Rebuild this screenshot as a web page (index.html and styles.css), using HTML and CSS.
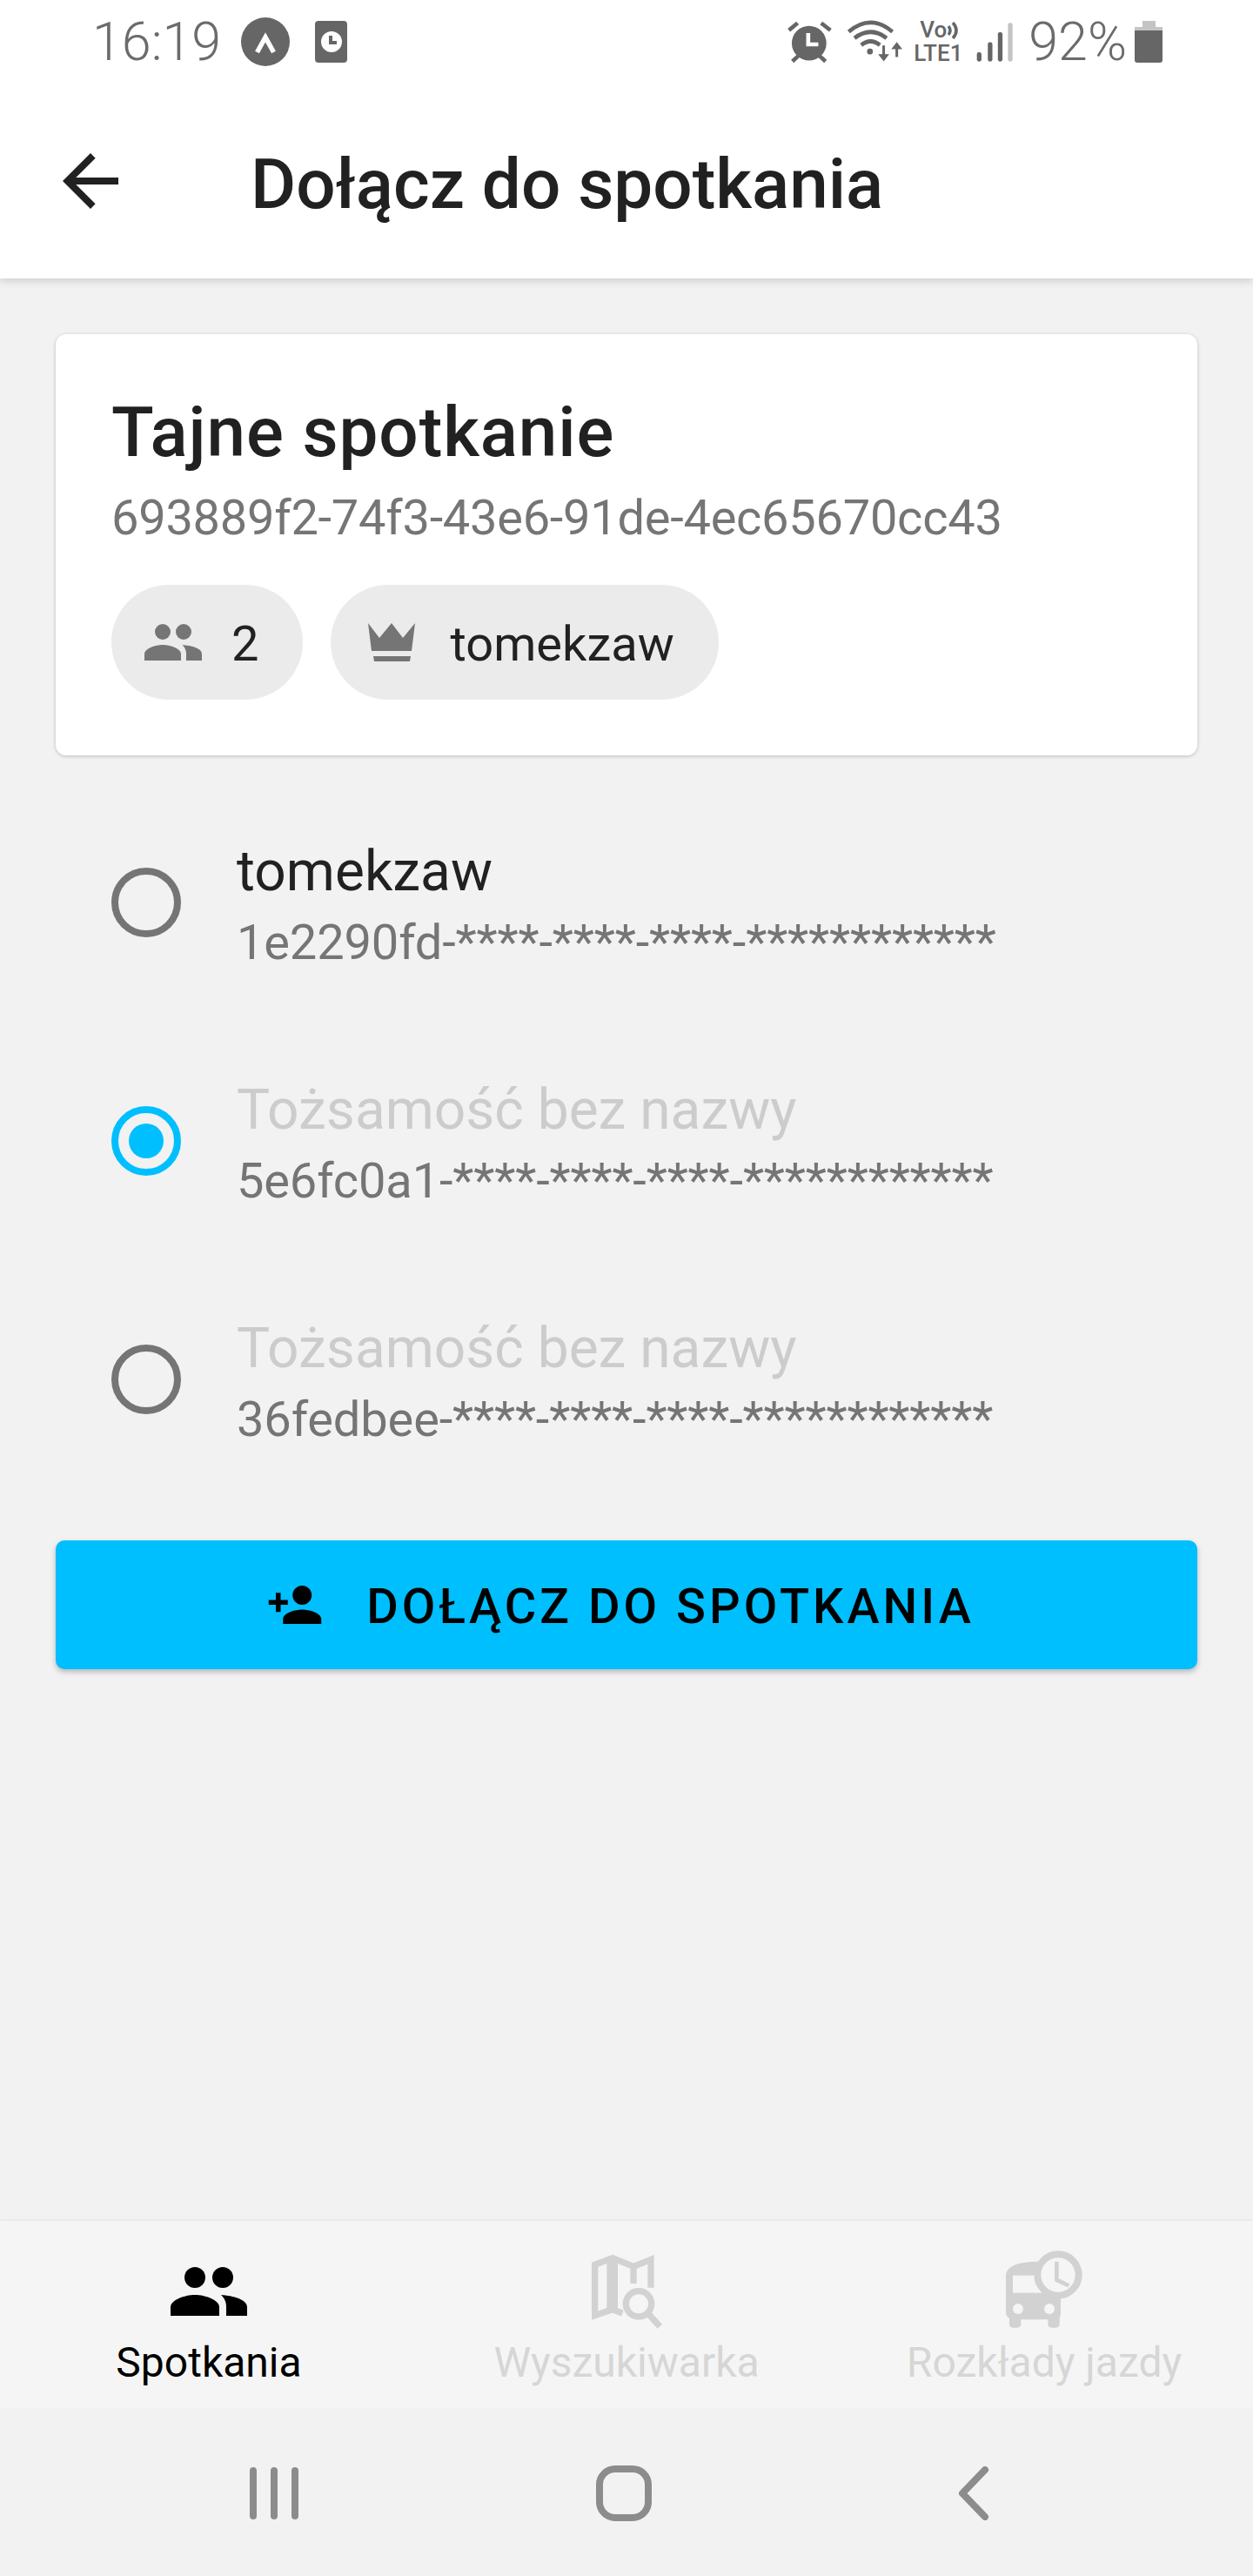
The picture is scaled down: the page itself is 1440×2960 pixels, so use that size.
FILE: index.html
```html
<!DOCTYPE html>
<html lang="pl">
<head>
  <meta charset="utf-8">
  <title>Dołącz do spotkania</title>
  <link rel="stylesheet" href="styles.css">
</head>
<body>
  <div class="statusbar">
    <span class="time">16:19</span>
    <svg class="st-circle" width="56" height="56" viewBox="0 0 56 56">
      <circle cx="28" cy="28" r="28" fill="#666"/>
      <path d="M18.5 40L28 23L37.5 40" fill="none" stroke="#fff" stroke-width="5.5"/>
    </svg>
    <svg class="st-calendar" width="37" height="48" viewBox="0 0 37 48">
      <rect width="37" height="48" rx="4" fill="#666"/>
      <circle cx="19" cy="24" r="12" fill="#fff"/>
      <path d="M18 17V25H25" fill="none" stroke="#666" stroke-width="4"/>
    </svg>
    <svg class="st-alarm" width="53" height="50" viewBox="30 35 160 150">
      <circle cx="108" cy="115" r="60" fill="#666"/>
      <path d="M105 80V119H140" fill="none" stroke="#fff" stroke-width="14"/>
      <path d="M38 70L68 45M150 45L182 70M50 178L72 158M165 178L143 158" stroke="#666" stroke-width="14" fill="none"/>
    </svg>
    <svg class="st-wifi" width="67" height="52" viewBox="235 35 200 155">
      <path d="M245 78Q320 15 395 78M265 100Q320 58 375 100M288 124Q320 98 352 124" fill="none" stroke="#666" stroke-width="14"/>
      <circle cx="318" cy="146" r="10" fill="#666"/>
      <path d="M365 125V165M410 165V125" stroke="#666" stroke-width="9" fill="none"/>
      <path d="M346 155H384L365 180ZM391 138H429L410 113Z" fill="#666"/>
    </svg>
    <div class="st-volte">
      <div class="volte-top">
        <span>Vo</span>
        <svg width="20" height="20" viewBox="0 0 20 20">
          <path d="M2 5Q6 10 2 15M7 1Q15 10 7 19" fill="none" stroke="#666" stroke-width="3.5"/>
        </svg>
      </div>
      <div>LTE1</div>
    </div>
    <svg class="st-signal" width="43" height="47" viewBox="678 45 130 140">
      <rect x="680" y="150" width="16" height="32" rx="7" fill="#666"/>
      <rect x="718" y="115" width="16" height="67" rx="7" fill="#666"/>
      <rect x="753" y="80" width="16" height="102" rx="7" fill="#666"/>
      <rect x="788" y="48" width="16" height="134" rx="7" fill="#c4c4c4"/>
    </svg>
    <span class="battery-pct">92%</span>
    <div class="battery">
      <div class="battery-cap"></div>
      <div class="battery-band"></div>
      <div class="battery-fill"></div>
    </div>
  </div>

  <div class="toolbar">
    <svg class="back" width="96" height="96" viewBox="0 0 24 24">
      <path d="M20 11H7.83l5.59-5.59L12 4l-8 8 8 8 1.41-1.41L7.83 13H20v-2z" fill="#212121"/>
    </svg>
    <h1>Dołącz do spotkania</h1>
  </div>

  <div class="content">
    <div class="card">
      <h2>Tajne spotkanie</h2>
      <div class="card-id">693889f2-74f3-43e6-91de-4ec65670cc43</div>
      <div class="chips">
        <div class="chip chip-count">
          <svg width="66" height="42" viewBox="0 0 88 56" fill="#757575">
            <circle cx="28" cy="12" r="12"/>
            <circle cx="60" cy="12" r="12"/>
            <path d="M0 56V46C0 38 16 32 28 32S56 38 56 46V56Z"/>
            <path d="M58 32C72 33 88 37 88 46V56H64V46C64 40 62 36 58 32Z"/>
          </svg>
          <span>2</span>
        </div>
        <div class="chip chip-owner">
          <svg width="54" height="44" viewBox="0 0 54 44" fill="#757575">
            <path d="M0 0L13 17L27 0L40 17L54 0L50 32H4Z"/>
            <path d="M6 38H49L48 44H7Z"/>
          </svg>
          <span>tomekzaw</span>
        </div>
      </div>
    </div>

    <div class="identities">
      <div class="identity">
        <div class="radio"></div>
        <div>
          <div class="identity-name">tomekzaw</div>
          <div class="identity-key">1e2290fd-****-****-****-************</div>
        </div>
      </div>
      <div class="identity">
        <div class="radio radio-on"></div>
        <div>
          <div class="identity-name unnamed">Tożsamość bez nazwy</div>
          <div class="identity-key">5e6fc0a1-****-****-****-************</div>
        </div>
      </div>
      <div class="identity">
        <div class="radio"></div>
        <div>
          <div class="identity-name unnamed">Tożsamość bez nazwy</div>
          <div class="identity-key">36fedbee-****-****-****-************</div>
        </div>
      </div>
    </div>

    <button class="join">
      <svg width="66" height="66" viewBox="0 0 24 24">
        <path d="M15 12c2.21 0 4-1.79 4-4s-1.79-4-4-4-4 1.79-4 4 1.79 4 4 4zm-9-2V7H4v3H1v2h3v3h2v-3h3v-2H6zm9 4c-2.67 0-8 1.34-8 4v2h16v-2c0-2.66-5.33-4-8-4z"/>
      </svg>
      <span>Dołącz do spotkania</span>
    </button>
  </div>

  <div class="tabs">
    <div class="tab tab-active">
      <div class="tab-icon">
        <svg width="88" height="56" viewBox="0 0 88 56" fill="#000">
          <circle cx="28" cy="12" r="12"/>
          <circle cx="60" cy="12" r="12"/>
          <path d="M0 56V46C0 38 16 32 28 32S56 38 56 46V56Z"/>
          <path d="M58 32C72 33 88 37 88 46V56H64V46C64 40 62 36 58 32Z"/>
        </svg>
      </div>
      <div class="tab-label">Spotkania</div>
    </div>
    <div class="tab">
      <div class="tab-icon">
        <svg width="110" height="110" viewBox="15 0 330 330" fill="none" stroke="#d2d2d2">
          <path d="M166 240L131 227L71 248V73L132 50L204 79L264 55V152" stroke-width="22"/>
          <path d="M131 50V227" stroke-width="38"/>
          <path d="M204 79V138" stroke-width="22"/>
          <circle cx="222" cy="208" r="44" stroke-width="22"/>
          <path d="M256 243L295 286" stroke-width="22"/>
        </svg>
      </div>
      <div class="tab-label">Wyszukiwarka</div>
    </div>
    <div class="tab">
      <div class="tab-icon">
        <svg width="110" height="110" viewBox="0 0 330 330">
          <path d="M33 115C33 75 75 62 150 62H222V240C222 250 218 256 218 258V280C218 286 212 290 206 290H190C184 290 178 286 178 280V262H85V280C85 286 79 290 73 290H57C51 290 45 286 45 280V258C37 252 33 246 33 235Z" fill="#d2d2d2"/>
          <rect x="57" y="110" width="100" height="60" fill="#f5f5f5"/>
          <circle cx="75" cy="225" r="18" fill="#f5f5f5"/>
          <circle cx="183" cy="225" r="18" fill="#f5f5f5"/>
          <circle cx="213" cy="108" r="71" fill="#f5f5f5" stroke="#d2d2d2" stroke-width="24"/>
          <path d="M208 62V125L250 145" fill="none" stroke="#d2d2d2" stroke-width="14"/>
        </svg>
      </div>
      <div class="tab-label">Rozkłady jazdy</div>
    </div>
  </div>

  <div class="sysnav">
    <div class="sys-item">
      <div class="sys-recents"><i></i><i></i><i></i></div>
    </div>
    <div class="sys-item">
      <div class="sys-home"></div>
    </div>
    <div class="sys-item">
      <svg width="36" height="62" viewBox="0 0 36 62">
        <path d="M31 4L5 31L31 58" fill="none" stroke="#8c8c8c" stroke-width="8" stroke-linecap="round" stroke-linejoin="round"/>
      </svg>
    </div>
  </div>
</body>
</html>
```

FILE: styles.css
```css
* {
  box-sizing: border-box;
}

body {
  margin: 0;
  height: 2960px;
  background-color: #f2f2f2;
  font-family: Roboto, sans-serif;
  display: flex;
  flex-direction: column;
}

/* status bar */
.statusbar {
  height: 96px;
  background-color: white;
  display: flex;
  align-items: center;
  padding: 0 104px 0 106px;
  color: #6b6b6b;
  position: relative;
  z-index: 1;
}

.time,
.battery-pct {
  font-size: 61px;
  font-weight: 300;
  line-height: 96px;
}

.st-circle {
  margin-left: 23px;
}

.st-calendar {
  margin-left: 29px;
}

.st-alarm {
  margin-left: auto;
}

.st-wifi {
  margin-left: 15px;
}

.st-volte {
  margin-left: 11px;
  width: 58px;
  font-size: 26px;
  font-weight: 500;
  line-height: 27px;
  color: #666;
}

.volte-top {
  display: flex;
  align-items: center;
  padding-left: 7px;
}

.st-signal {
  margin-left: 14px;
}

.battery-pct {
  margin-left: 17px;
}

.battery {
  margin-left: 9px;
  width: 32px;
  height: 48px;
  display: flex;
  flex-direction: column;
  align-items: center;
}

.battery-cap {
  width: 15px;
  height: 7px;
  background-color: #c4c4c4;
}

.battery-band {
  width: 32px;
  height: 4px;
  background-color: #c4c4c4;
}

.battery-fill {
  width: 32px;
  flex: 1;
  background-color: #666;
  border-radius: 0 0 3px 3px;
}

/* toolbar */
.toolbar {
  height: 224px;
  background-color: white;
  display: flex;
  align-items: center;
  padding-left: 56px;
  box-shadow: 0 2px 10px rgba(0, 0, 0, 0.18);
  position: relative;
}

.toolbar h1 {
  margin: 8px 0 0 136px;
  font-size: 80px;
  font-weight: 500;
  line-height: 96px;
  color: #212121;
}

.content {
  flex: 1;
  padding: 64px 64px 0;
}

/* meeting card */
.card {
  height: 484px;
  background-color: white;
  border-radius: 12px;
  padding: 65px 64px 0;
  box-shadow: 0 1px 4px rgba(0, 0, 0, 0.22);
}

.card h2 {
  margin: 0;
  font-size: 80px;
  font-weight: 500;
  line-height: 96px;
  letter-spacing: 0.9px;
  color: #212121;
}

.card-id {
  margin-top: 18px;
  font-size: 56px;
  line-height: 64px;
  letter-spacing: -0.27px;
  color: #757575;
}

.chips {
  display: flex;
  gap: 32px;
  margin-top: 45px;
}

.chip {
  height: 132px;
  border-radius: 66px;
  background-color: #ebebeb;
  display: flex;
  align-items: center;
  font-size: 56px;
  line-height: 64px;
  color: #212121;
}

.chip span {
  padding-top: 4px;
}

.chip-count {
  padding: 0 51px 0 38px;
  gap: 34px;
}

.chip-owner {
  padding: 0 51px 0 43px;
  gap: 40px;
}

/* identity list */
.identities {
  margin-top: 34px;
}

.identity {
  height: 274px;
  display: flex;
  align-items: center;
  padding-left: 64px;
  gap: 64px;
}

.radio {
  width: 80px;
  height: 80px;
  margin-top: -5px;
  border: 8px solid #757575;
  border-radius: 50%;
  display: flex;
  align-items: center;
  justify-content: center;
}

.radio-on {
  border-color: #00bfff;
}

.radio-on::after {
  content: "";
  width: 40px;
  height: 40px;
  border-radius: 50%;
  background-color: #00bfff;
}

.identity-name {
  font-size: 64px;
  line-height: 76px;
  color: #212121;
}

.unnamed {
  color: #cccccc;
}

.identity-key {
  margin-top: 11px;
  font-size: 56px;
  line-height: 64px;
  letter-spacing: -0.15px;
  color: #757575;
}

/* join button */
.join {
  width: 100%;
  height: 148px;
  margin-top: 46px;
  padding: 0 14px 0 0;
  border: none;
  border-radius: 10px;
  background-color: #00bfff;
  display: flex;
  align-items: center;
  justify-content: center;
  gap: 49px;
  font-family: Roboto, sans-serif;
  font-size: 56px;
  font-weight: 500;
  letter-spacing: 4px;
  text-transform: uppercase;
  color: black;
  box-shadow: 0 3px 6px rgba(0, 0, 0, 0.25);
}

.join span {
  padding-top: 3px;
}

/* bottom tabs */
.tabs {
  height: 215px;
  display: flex;
  padding-top: 33px;
  background-color: #f5f5f5;
  box-shadow: 0 -1px 3px rgba(0, 0, 0, 0.06);
}

.tab {
  flex: 1;
  display: flex;
  flex-direction: column;
  align-items: center;
  color: #d6d6d6;
}

.tab-active {
  color: black;
}

.tab-icon {
  height: 96px;
  display: flex;
  align-items: center;
  justify-content: center;
}

.tab-label {
  margin-top: 6px;
  font-size: 48px;
  line-height: 56px;
}

/* android nav buttons */
.sysnav {
  height: 193px;
  display: flex;
  padding: 3px 0 0 114px;
}

.sys-item {
  width: 402px;
  display: flex;
  align-items: center;
  justify-content: center;
}

.sys-recents {
  display: flex;
  gap: 16px;
}

.sys-recents i {
  display: block;
  width: 8px;
  height: 60px;
  border-radius: 4px;
  background-color: #8c8c8c;
}

.sys-home {
  width: 64px;
  height: 64px;
  border: 8px solid #8c8c8c;
  border-radius: 22px;
}
```
